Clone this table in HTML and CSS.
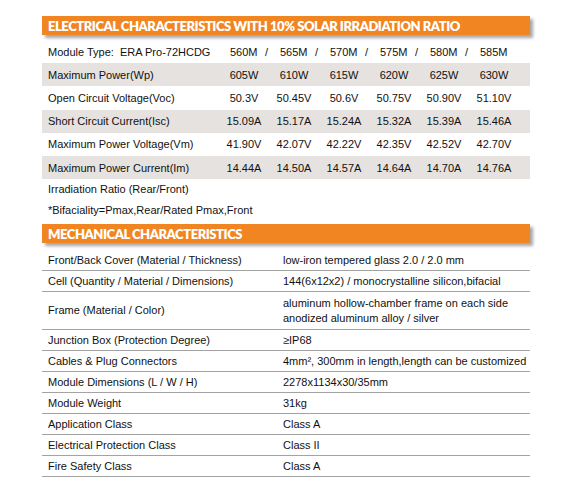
FILE: index.html
```html
<!DOCTYPE html>
<html lang="en">
<head>
    <meta charset="UTF-8">
    <title>ERA Pro-72HCDG Datasheet</title>
    <link rel="stylesheet" href="styles.css">
</head>
<body>
    <div class="sheet">
        <h2 class="band">ELECTRICAL CHARACTERISTICS WITH 10% SOLAR IRRADIATION RATIO</h2>

        <div class="elec">
            <div class="erow">
                <span class="label">Module Type:&nbsp; ERA Pro-72HCDG</span>
                <span class="model">560M<i>/</i></span>
                <span class="model">565M<i>/</i></span>
                <span class="model">570M<i>/</i></span>
                <span class="model">575M<i>/</i></span>
                <span class="model">580M<i>/</i></span>
                <span class="model">585M</span>
            </div>
            <div class="erow shade">
                <span class="label">Maximum Power(Wp)</span>
                <span>605W</span><span>610W</span><span>615W</span><span>620W</span><span>625W</span><span>630W</span>
            </div>
            <div class="erow">
                <span class="label">Open Circuit Voltage(Voc)</span>
                <span>50.3V</span><span>50.45V</span><span>50.6V</span><span>50.75V</span><span>50.90V</span><span>51.10V</span>
            </div>
            <div class="erow shade">
                <span class="label">Short Circuit Current(Isc)</span>
                <span>15.09A</span><span>15.17A</span><span>15.24A</span><span>15.32A</span><span>15.39A</span><span>15.46A</span>
            </div>
            <div class="erow">
                <span class="label">Maximum Power Voltage(Vm)</span>
                <span>41.90V</span><span>42.07V</span><span>42.22V</span><span>42.35V</span><span>42.52V</span><span>42.70V</span>
            </div>
            <div class="erow shade">
                <span class="label">Maximum Power Current(Im)</span>
                <span>14.44A</span><span>14.50A</span><span>14.57A</span><span>14.64A</span><span>14.70A</span><span>14.76A</span>
            </div>
            <div class="note">Irradiation Ratio (Rear/Front)</div>
            <div class="note">*Bifaciality=Pmax,Rear/Rated Pmax,Front</div>
        </div>

        <h2 class="band">MECHANICAL CHARACTERISTICS</h2>

        <div class="mech">
            <div class="mrow"><span>Front/Back Cover (Material / Thickness)</span><span>low-iron tempered glass 2.0 / 2.0 mm</span></div>
            <div class="mrow"><span>Cell (Quantity / Material / Dimensions)</span><span>144(6x12x2) / monocrystalline silicon,bifacial</span></div>
            <div class="mrow tall"><span>Frame (Material / Color)</span><span>aluminum hollow-chamber frame on each side<br>anodized aluminum alloy / silver</span></div>
            <div class="mrow"><span>Junction Box (Protection Degree)</span><span>&ge;IP68</span></div>
            <div class="mrow"><span>Cables &amp; Plug Connectors</span><span>4mm&sup2;, 300mm in length,length can be customized</span></div>
            <div class="mrow"><span>Module Dimensions (L / W / H)</span><span>2278x1134x30/35mm</span></div>
            <div class="mrow"><span>Module Weight</span><span>31kg</span></div>
            <div class="mrow"><span>Application Class</span><span>Class A</span></div>
            <div class="mrow"><span>Electrical Protection Class</span><span>Class II</span></div>
            <div class="mrow"><span>Fire Safety Class</span><span>Class A</span></div>
        </div>
    </div>
</body>
</html>
```

FILE: styles.css
```css
:root {
    --orange: #F08522;
    --shade: #E5E2DF;
    --rule: #A3A3A3;
    --ink: #111;
}
body {
    margin: 0;
    background: #fff;
    color: var(--ink);
    font-family: 'Liberation Sans', Arial, sans-serif;
    font-size: 11px;
}
.sheet {
    width: 488px;
    margin-left: 42px;
    padding-top: 16px;
}
.band {
    margin: 0;
    height: 19px;
    line-height: 20px;
    padding-left: 6px;
    background: var(--orange);
    color: #fff;
    font-family: Lato, sans-serif;
    font-weight: 800;
    font-size: 13px;
    letter-spacing: -0.45px;
    box-shadow: 3px 3px 3px rgba(0, 0, 0, 0.35);
}
.elec {
    margin-top: 5px;
    margin-bottom: 3px;
}
.erow {
    display: grid;
    grid-template-columns: 177px repeat(6, 50px) 1fr;
    height: 23.2px;
    align-items: center;
}
.erow span {
    text-align: center;
}
.erow .label {
    text-align: left;
    padding-left: 6px;
}
.erow .model {
    display: flex;
    justify-content: space-between;
    padding: 0 1px 0 11px;
}
.erow .model i {
    font-style: normal;
}
.shade {
    background: var(--shade);
}
.note {
    height: 21px;
    line-height: 21px;
    padding-left: 6px;
}
.mech {
    margin-top: 7px;
}
.mrow {
    display: grid;
    grid-template-columns: 238px 1fr;
    align-items: center;
    min-height: 20px;
    border-bottom: 1px solid var(--rule);
    line-height: 15px;
}
.mrow span:first-child {
    padding-left: 6px;
}
.mrow span:last-child {
    padding-left: 3px;
}
.mrow.tall {
    min-height: 37px;
}
```
